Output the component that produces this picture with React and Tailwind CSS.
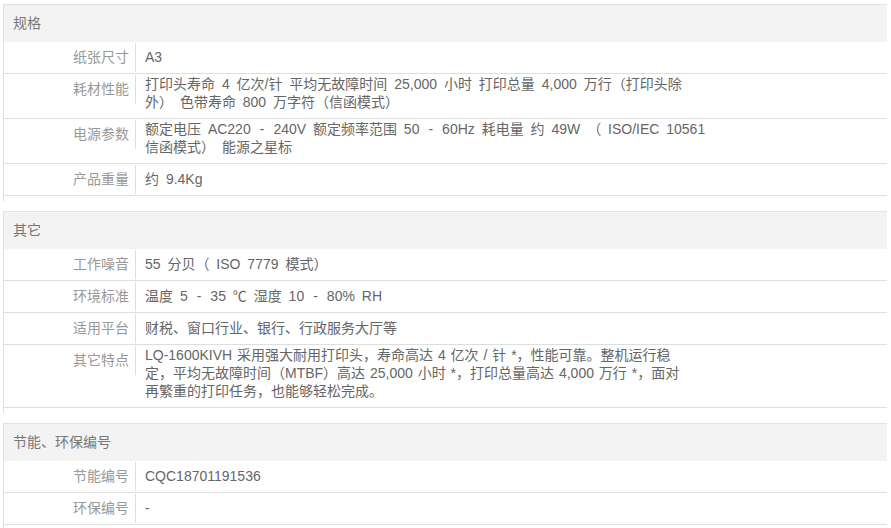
const Dash = () => <span className="px-[9px]">-</span>;

const sections = [
  {
    title: '规格',
    rows: [
      { label: '纸张尺寸', lines: ['A3'] },
      {
        label: '耗材性能',
        lines: [
          '打印头寿命 4 亿次/针 平均无故障时间 25,000 小时 打印总量 4,000 万行（打印头除',
          '外） 色带寿命 800 万字符（信函模式）',
        ],
      },
      {
        label: '电源参数',
        lines: [
          <>额定电压 AC220<Dash />240V 额定频率范围 50<Dash />60Hz 耗电量 约 49W （ ISO/IEC 10561</>,
          '信函模式） 能源之星标',
        ],
      },
      { label: '产品重量', lines: ['约 9.4Kg'] },
    ],
  },
  {
    title: '其它',
    rows: [
      { label: '工作噪音', lines: ['55 分贝（ ISO 7779 模式）'] },
      { label: '环境标准', lines: [<>温度 5<Dash />35 ℃ 湿度 10<Dash />80% RH</>] },
      { label: '适用平台', lines: ['财税、窗口行业、银行、行政服务大厅等'] },
      {
        label: '其它特点',
        tight: true,
        lines: [
          'LQ-1600KIVH 采用强大耐用打印头，寿命高达 4 亿次 / 针 *，性能可靠。整机运行稳',
          '定，平均无故障时间（MTBF）高达 25,000 小时 *，打印总量高达 4,000 万行 *，面对',
          '再繁重的打印任务，也能够轻松完成。',
        ],
      },
    ],
  },
  {
    title: '节能、环保编号',
    rows: [
      { label: '节能编号', lines: ['CQC18701191536'] },
      { label: '环保编号', lines: ['-'] },
    ],
  },
];

const Row = ({ label, lines, tight }) => {
  const multi = lines.length > 1;
  return (
    <div className="flex items-start border-b border-[#dedede]">
      <div className="w-[132px] shrink-0 h-[29px] leading-[29px] my-[1px] pr-[6px] text-right text-[#999] border-r border-[#dedede]">
        {label}
      </div>
      <div
        className={`pl-[9px] leading-[18px] text-[#666] whitespace-nowrap ${multi ? 'pt-[1px] pb-[7px]' : 'py-[6px]'} ${tight ? '[word-spacing:1px]' : '[word-spacing:3px]'}`}
      >
        {lines.map((line, i) => (
          <div key={i}>{line}</div>
        ))}
      </div>
    </div>
  );
};

const Section = ({ title, rows, last }) => (
  <div className={`border-l border-[#dedede] ${last ? '' : 'pb-[5px]'}`}>
    <div className="h-[38px] border-t border-[#e3e3e3] bg-[#f3f3f3] pl-[9px] flex items-center text-[#777]">
      {title}
    </div>
    {rows.map((row) => (
      <Row key={row.label} {...row} />
    ))}
    {last && <div className="h-[10px]" />}
  </div>
);

export default function App() {
  return (
    <div
      className="w-[891px] h-[528px] overflow-hidden bg-white pt-[4px] pl-[3px] pr-[4px] text-[14px]"
      style={{ fontFamily: '"Liberation Sans", "Noto Sans CJK SC", sans-serif' }}
    >
      <div className="flex flex-col gap-[10px]">
        {sections.map((s, i) => (
          <Section key={s.title} {...s} last={i === sections.length - 1} />
        ))}
      </div>
    </div>
  );
}
